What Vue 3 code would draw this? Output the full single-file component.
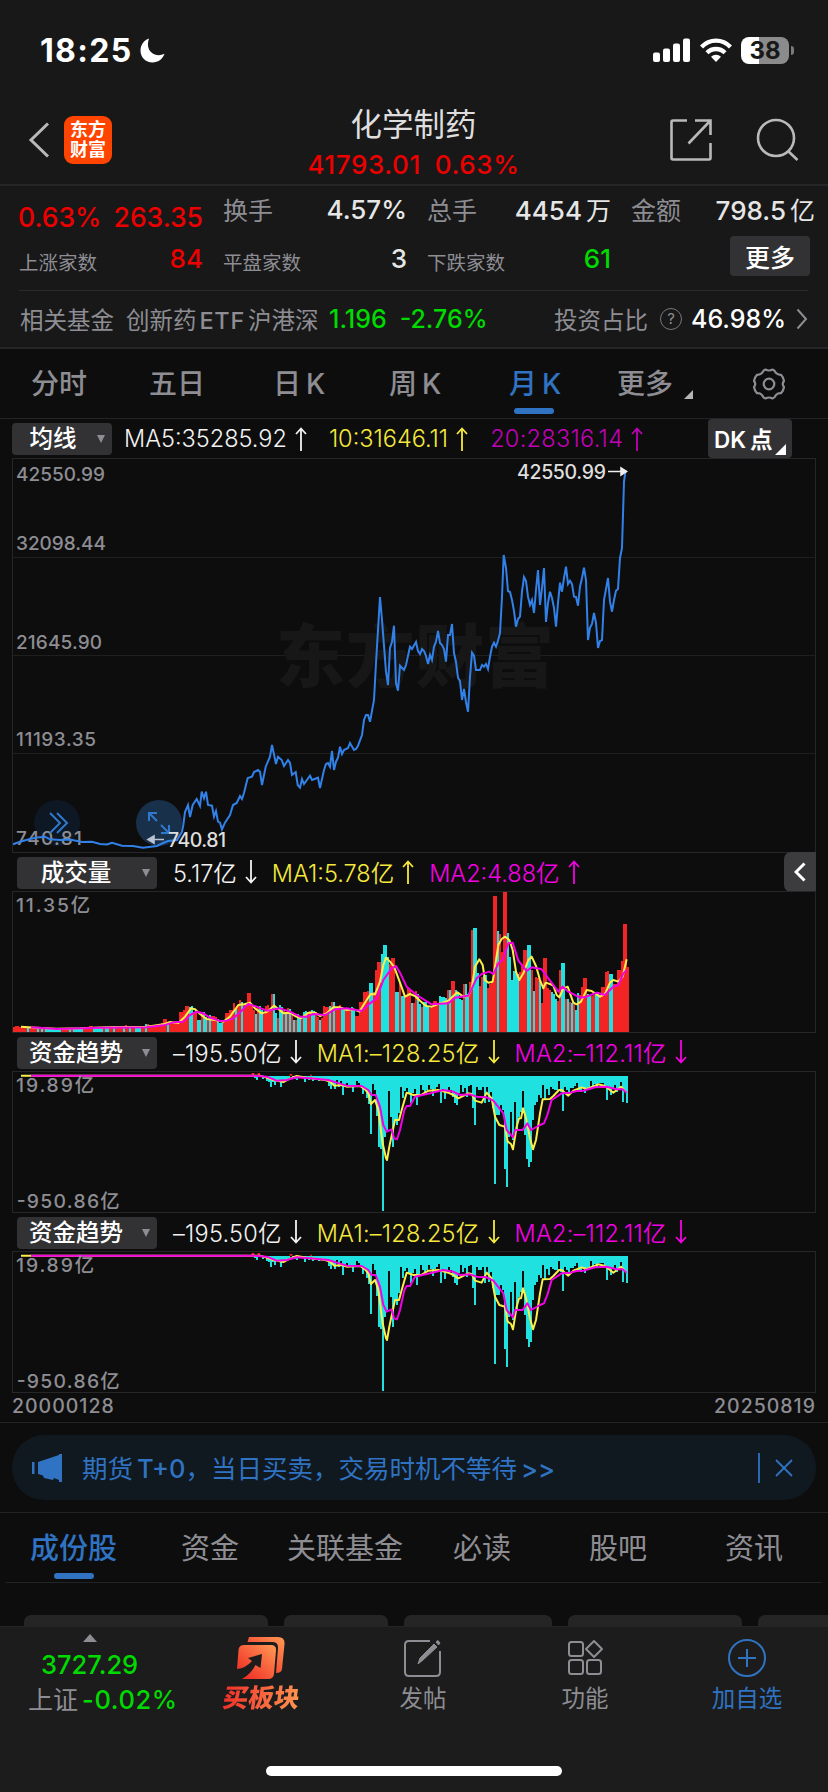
<script setup>
const periods = [
  { text: '分时' },
  { text: '五日' },
  { text: '日', suffix: 'K' },
  { text: '周', suffix: 'K' },
  { text: '月', suffix: 'K', active: true },
  { text: '更多', corner: true },
]

const sections = ['成份股', '资金', '关联基金', '必读', '股吧', '资讯']

const averages = [
  { text: 'MA5:35285.92', tone: 'white' },
  { text: '10:31646.11', tone: 'yellow' },
  { text: '20:28316.14', tone: 'purple' },
]

const volumeLegend = [
  { text: '5.17亿', tone: 'white', down: true },
  { text: 'MA1:5.78亿', tone: 'yellow' },
  { text: 'MA2:4.88亿', tone: 'magenta' },
]

const flowLegend = [
  { text: '–195.50亿', tone: 'white', down: true },
  { text: 'MA1:–128.25亿', tone: 'yellow', down: true },
  { text: 'MA2:–112.11亿', tone: 'magenta', down: true },
]

const priceLine = `13,844.3 20,841.7 30,839 37,837.5 45,836.7 50,839.3 60,840 70,839.5 82,842 92,841.7 100,844
107,844.5 112,842.7 122,845.7 133,846 143,847.7 157,846 163,843 168,841 177,840 182,831.7 183.3,825 185,812 188,805
190,817 192.7,805 196.7,799 200,806 201.7,791.7 204,798.3 206,791.7 208,805 212,805.7 214,816.7 216,811 218,821.7
220,822.7 222,829.3 225,822.7 230,815 233,805 236.7,803 240,796 242,799 244,793 247.7,778 252,776.7 254,772 258,770
260,771.7 262,785 265.7,766.7 270,756.7 272,745 276,764 278,756.7 281.7,760 284,766 288,760 290,763 292,775 295.7,772
297.7,785 300,787.7 302,779 304,784 310,775.7 312,780 318,777.7 320,788 324,770 326,764 328,763 330,766.7 332,751
334,770 336,761.7 338,757.7 340,746.7 342,754 344,750 348,748 350,743 354,750 356,749 358,745.7 362,735 364,720
366,715 368,715 370,721.7 374,700 376,663 378,630 380,597 382,620 386,671.7 388,685 390,648 392,641.7 394,625.7
396,683 398,690.7 400,665.7 404,670 406,665 410,646.7 412,649 416,642 418,651 420,654 422,649 424,651 426,656
428,664 430,655 432,660 434,646.7 436,641.7 438,631 440,643 442,645 444,649 446,661.7 448,635 450,635 452,624
454,653 456,662 458,677.7 460,681 462,700 464,689 466,702 468,711.7 470,676.7 472,652.7 474,655.7 476,670 480,670
482,665 484,666.7 486,664 488,669 490,656.7 492,646.7 494,642.7 496,646.7 498,640.7 500,633 502,596.7 503.7,555
506,568 508,591 510,592 512,600 514,611 516,626.7 518,619 520,616.7 522,591.7 524,577 526,581 528,596.7 530,605
532,600 534,613 536,590 538,570 540,605 542,588 544,568 546,622 548,603 550,591.7 552,598 554,608 556,626.7
558,603 560,582.7 562,591.7 564,578 566,566.7 568,584 570,580.7 572,584 574,596.7 576,597 578,605.7 580,586.7
582,578 584,567.7 586,580 588,640 590,627.7 592,624 594,613 596,623 598,648 600,641 602,640 604,600 606,589
608,578 610,601.7 612,611.7 614,600 616,590.7 618,589 620,558 622,548 624,481.7 625.7,470`

// monthly volume, one bar every 2px
const volumes = [
  5, 6, 6, 5, 5, 6, 5, 5, 4, 4, 4, 4, 4, 3, 4, 3, 3, 3, 3, 3, 3, 3, 3, 3, 3, 4, 3, 4, 4, 4,
  3, 3, 3, 3, 4, 4, 4, 4, 6, 6, 4, 4, 4, 4, 4, 4, 4, 5, 5, 6, 6, 5, 5, 5, 4, 5, 7, 6, 5, 5,
  5, 5, 5, 5, 5, 6, 8, 8, 7, 6, 6, 6, 6, 7, 9, 13, 13, 10, 9, 9, 10, 10, 10, 20, 20, 22, 26, 26, 25, 26,
  20, 19, 12, 12, 18, 20, 15, 13, 17, 16, 16, 15, 13, 9, 9, 10, 19, 19, 22, 22, 29, 24, 26, 32, 30, 28, 28, 39, 39, 28,
  22, 18, 24, 26, 22, 18, 26, 27, 22, 38, 38, 19, 14, 27, 25, 22, 20, 24, 23, 20, 12, 12, 18, 16, 15, 20, 21, 20, 21, 22,
  21, 20, 15, 12, 14, 26, 25, 25, 26, 30, 30, 25, 24, 27, 25, 24, 22, 24, 24, 25, 22, 16, 16, 30, 30, 40, 40, 41, 49, 49,
  40, 62, 70, 70, 78, 87, 87, 75, 68, 74, 74, 40, 40, 50, 36, 36, 36, 44, 42, 29, 29, 41, 38, 28, 25, 30, 30, 26, 24, 26,
  31, 31, 28, 36, 35, 35, 34, 42, 42, 51, 51, 42, 40, 33, 32, 48, 48, 38, 50, 102, 104, 104, 59, 46, 55, 56, 57, 44, 48, 50,
  136, 136, 101, 98, 80, 140, 140, 99, 75, 52, 61, 61, 58, 60, 68, 82, 82, 87, 87, 62, 41, 55, 54, 52, 29, 74, 74, 44, 42, 40,
  38, 33, 31, 62, 69, 69, 33, 33, 30, 29, 28, 22, 39, 37, 45, 54, 54, 38, 37, 36, 37, 40, 40, 37, 45, 45, 60, 61, 58, 58,
  48, 48, 62, 62, 71, 108, 108, 65,
]

// [first, last] index of the months that closed lower
const falling = [
  [7, 7], [12, 12], [14, 14], [16, 23], [28, 28], [30, 34], [40, 41], [42, 44], [46, 47], [50, 50], [55, 55], [58, 58],
  [61, 63], [66, 66], [77, 77], [88, 89], [92, 93], [95, 96], [98, 98], [102, 104], [111, 111], [114, 114],
  [121, 121], [123, 124], [130, 131], [133, 134], [136, 136], [138, 138], [140, 140], [142, 143], [145, 146],
  [149, 150], [153, 153], [158, 158], [160, 160], [164, 165], [169, 170], [178, 179], [184, 187], [191, 192],
  [194, 195], [199, 199], [202, 203], [205, 207], [213, 216], [218, 218], [221, 224], [226, 227], [230, 232],
  [235, 236], [242, 242], [247, 252], [257, 258], [260, 260], [263, 263], [269, 271], [274, 275], [277, 277],
  [279, 279], [281, 282], [287, 288], [291, 292], [298, 299],
]

const bars = volumes.map((h, i) => ({
  x: 39 + i * 6,
  y: 576 - h * 3,
  h: h * 3,
  down: falling.some(([a, b]) => i >= a && i <= b),
}))

const volumeMa1 = `63,560 110,563 170,566 240,565 320,562 440,560 490,553 510,546 535,549 555,530 573,505 585,508
600,522 620,537 645,540 670,545 690,530 715,495 735,492 750,488 765,505 785,520 800,516 822,497 835,507 850,520
870,518 885,528 903,535 925,518 945,518 960,528 980,520 1000,502 1020,502 1040,510 1060,508 1078,515 1100,480
1112,462 1125,463 1140,425 1150,375 1158,353 1170,365 1182,380 1200,428 1215,470 1230,462 1245,468 1260,482
1278,498 1295,500 1320,490 1345,482 1372,457 1390,470 1405,468 1415,445 1425,380 1438,358 1448,375 1455,420
1465,428 1478,425 1485,380 1495,315 1505,297 1515,290 1528,300 1538,330 1548,395 1558,420 1570,400 1585,360
1595,350 1608,378 1620,420 1630,445 1637,428 1650,432 1660,437 1670,465 1678,472 1690,445 1703,440 1710,460
1720,488 1730,493 1743,485 1760,450 1775,453 1800,470 1815,462 1830,428 1840,420 1855,425 1868,410 1880,358`

const volumeMa2 = `93,562 170,567 300,563 440,562 490,556 520,547 550,545 570,525 590,515 610,520 630,533 660,543
680,542 700,535 725,512 745,492 770,500 800,512 840,505 870,515 900,530 920,530 940,522 975,525 1005,508 1040,505
1085,513 1110,490 1130,475 1150,420 1175,385 1188,378 1200,398 1220,440 1250,465 1295,493 1345,490 1365,473
1405,467 1430,415 1445,402 1468,395 1480,402 1495,370 1508,360 1525,310 1538,308 1555,362 1580,393 1595,382
1625,388 1645,415 1675,455 1688,440 1705,455 1740,473 1760,470 1790,458 1815,465 1840,440 1855,435 1870,400 1880,390`

// lower end of each outflow bar, starting with month 121
const outflow = [
  145, 151, 140, 142, 148, 145, 152, 155, 172, 155, 164, 150, 155, 170, 156, 152, 150, 145, 137, 140, 146, 150, 144, 144, 140,
  155, 148, 150, 140, 153, 150, 150, 153, 146, 150, 150, 152, 168, 178, 162, 176, 150, 172, 152, 196, 165, 160, 168, 170, 187,
  168, 152, 158, 165, 192, 178, 205, 222, 312, 162, 180, 258, 350, 356, 542, 320, 300, 183, 260, 350, 270, 285, 250, 170, 205,
  182, 175, 190, 218, 190, 178, 226, 195, 165, 180, 190, 180, 165, 178, 198, 178, 172, 162, 218, 178, 206, 180, 172, 180, 200,
  218, 226, 190, 165, 186, 175, 200, 168, 165, 235, 286, 172, 180, 180, 170, 220, 172, 215, 185, 235, 463, 255, 254, 225, 240,
  416, 471, 320, 245, 330, 217, 300, 260, 245, 184, 316, 386, 410, 396, 270, 225, 216, 195, 205, 165, 207, 178, 195, 172, 178,
  180, 180, 153, 185, 242, 170, 180, 190, 175, 175, 167, 160, 183, 185, 172, 188, 175, 170, 153, 168, 162, 170, 160, 160, 158,
  175, 210, 178, 195, 175, 165, 185, 175, 155, 215, 182, 220,
]

const outflowPath = outflow.map((y, i) => `M${762 + i * 6} 137h6V${y}h-6z`).join('')

const flowMa1 = `63,137 780,137 800,143 820,150 850,156 865,148 890,138 920,143 975,150 990,155 1003,167 1025,165
1040,170 1080,168 1095,178 1105,190 1113,222 1125,210 1135,240 1148,340 1158,385 1161,390 1168,350 1185,270 1197,270
1205,240 1220,188 1240,195 1263,195 1285,182 1315,180 1345,188 1360,195 1375,205 1405,190 1415,192 1425,212
1445,218 1460,188 1475,205 1485,260 1498,285 1515,290 1523,335 1533,342 1539,358 1550,290 1557,265 1563,265
1569,235 1578,265 1590,325 1599,358 1608,330 1620,250 1628,208 1650,207 1660,198 1677,180 1685,180 1705,197
1720,182 1745,172 1760,177 1795,163 1815,168 1840,188 1863,170 1880,188`

const flowMa2 = `93,137 765,137 800,140 830,152 860,150 890,142 930,145 985,150 1010,158 1040,167 1085,168 1105,180
1115,195 1127,195 1140,230 1150,285 1160,305 1175,298 1182,325 1191,328 1200,300 1213,240 1220,228 1230,228
1245,200 1290,190 1330,180 1360,185 1380,195 1410,193 1430,200 1460,202 1480,212 1510,250 1520,300 1539,322
1545,300 1568,300 1582,280 1593,300 1620,285 1632,280 1642,255 1655,210 1685,190 1710,188 1730,183 1750,182
1785,172 1820,170 1850,178 1868,178 1880,188`
</script>

<template>
  <div class="screen">
    <header class="top">
      <div class="status">
        <span class="clock">18:25</span>
        <svg class="moon" width="25" height="25" viewBox="0 0 25 25"><path d="M9 0.5C7 6.500 8 11.500 11.500 14.500C15 17.500 20 18 24.500 15.800C22.500 21.300 18 24.500 12.500 24.500C5.500 24.500 0.500 19.400 0.500 12.600C0.500 7 4 2 9 0.500Z" fill="#fff" /></svg>
        <svg class="signal" width="38" height="24" viewBox="0 0 38 24" fill="#fff">
          <rect x="0" y="14.500" width="7" height="9.500" rx="2" />
          <rect x="10" y="10.500" width="7" height="13.500" rx="2" />
          <rect x="20" y="5.500" width="7" height="18.500" rx="2" />
          <rect x="30" y="0.500" width="7" height="23.500" rx="2" />
        </svg>
        <svg class="wifi" width="32" height="24" viewBox="0 0 32 24" fill="none" stroke="#fff" stroke-width="4.300">
          <path d="M1.500 9C9.500 0.500 22.500 0.500 30.500 9" />
          <path d="M7 14.800C12 9.700 20 9.700 25 14.800" />
          <path d="M16 24L11 18.700C13.800 16 18.200 16 21 18.700Z" fill="#fff" stroke="none" />
        </svg>
        <div class="battery"><span>38</span></div>
        <i class="nub"></i>
      </div>

      <div class="nav">
        <svg width="22" height="36" viewBox="0 0 22 36" fill="none" stroke="#b9b9b9" stroke-width="3"><path d="M20 1.500L3 18L20 34.500" /></svg>
        <div class="logo"><span>东方</span><span>财富</span></div>
        <div class="heading">
          <h1>化学制药</h1>
          <p><span>41793.01</span><span>0.63%</span></p>
        </div>
        <svg class="share" width="44" height="44" viewBox="0 0 44 44" fill="none" stroke="#b9b9b9" stroke-width="2.600">
          <path d="M18 2.500H4Q2.500 2.500 2.500 4V40Q2.500 41.500 4 41.500H40Q41.500 41.500 41.500 40V25" />
          <path d="M26 2.500H41.500V17M41 3L19.500 25.500" />
        </svg>
        <svg class="search" width="44" height="44" viewBox="0 0 44 44" fill="none" stroke="#b9b9b9" stroke-width="2.600">
          <circle cx="20" cy="20" r="18" />
          <path d="M32 33L41.500 42" />
        </svg>
      </div>
    </header>

    <section class="stats">
      <div class="grid">
        <div class="pair big red"><span>0.63%</span><span>263.35</span></div>
        <div class="pair"><em>换手</em><b>4.57%</b></div>
        <div class="pair"><em>总手</em><b>4454<i>万</i></b></div>
        <div class="pair"><em>金额</em><b>798.5<i>亿</i></b></div>
        <div class="pair low"><em>上涨家数</em><b class="red">84</b></div>
        <div class="pair low"><em>平盘家数</em><b>3</b></div>
        <div class="pair low"><em>下跌家数</em><b class="green">61</b></div>
        <button class="more">更多</button>
      </div>
      <div class="fund">
        <span>相关基金</span>
        <span class="fund-name">创新药<i>ETF</i>沪港深</span>
        <span class="green quote">1.196</span>
        <span class="green quote change">-2.76%</span>
        <span class="ratio">投资占比</span>
        <span class="help">?</span>
        <span class="quote percent">46.98%</span>
        <svg width="12" height="22" viewBox="0 0 12 22" fill="none" stroke="#8d8d93" stroke-width="2"><path d="M1.500 1.500L10 11L1.500 20.500" /></svg>
      </div>
    </section>

    <nav class="periods">
      <span v-for="p in periods" :key="p.text" :class="{ active: p.active, corner: p.corner }">{{ p.text }}<i v-if="p.suffix">{{ p.suffix }}</i></span>
      <svg width="34" height="34" viewBox="0 0 34 34" fill="none" stroke="#8d8d93" stroke-width="2.200" stroke-linejoin="round">
        <path d="M13.500 2.500Q17 4.500 20.500 2.500Q22.500 3 24 6Q26 8 29 7.800Q31.500 10.500 32 14Q29.500 17 32 20Q31.500 23.500 29 26.200Q26 26 24 28Q22.500 31 20.500 31.500Q17 29.500 13.500 31.500Q11.500 31 10 28Q8 26 5 26.200Q2.500 23.500 2 20Q4.500 17 2 14Q2.500 10.500 5 7.800Q8 8 10 6Q11.500 3 13.500 2.500Z" />
        <circle cx="17" cy="17" r="5.300" />
      </svg>
    </nav>

    <div class="averages">
      <span class="picker short">均线</span>
      <span v-for="a in averages" :key="a.text" class="legend" :class="a.tone">
        {{ a.text }}<svg width="12" height="24" viewBox="0 0 12 24"><path d="M6 24V1.500M1 7L6 1.500L11 7" /></svg>
      </span>
      <span class="dk">DK<i>点</i></span>
    </div>

    <div class="pane price">
      <svg width="804" height="394" viewBox="12 458 804 394">
        <g stroke="#1f1f20" stroke-width="1">
          <path d="M12 557.500H816M12 655.500H816M12 753.500H816" />
        </g>
        <text x="276" y="682" class="watermark" textLength="278">东方财富</text>
        <circle cx="57" cy="823" r="23" fill="#0e1825" />
        <circle cx="159" cy="823" r="23" fill="#19304a" />
        <g class="axis">
          <text x="16" y="480.500" textLength="89">42550.99</text>
          <text x="16" y="550" textLength="90">32098.44</text>
          <text x="16" y="648.500" textLength="86">21645.90</text>
          <text x="16" y="746" textLength="80">11193.35</text>
          <text x="16" y="845" textLength="66">740.81</text>
        </g>
        <g fill="none" stroke="#2f78cb" stroke-width="2">
          <path d="M50 813L60 823L50 833M57 813L67 823L57 833" />
          <path d="M149 821V813H157M149 813L157 821M161 825L169 833M161 833H169V825" />
        </g>
        <polyline :points="priceLine" fill="none" stroke="#3181e8" stroke-width="2" />
        <g class="mark">
          <text x="517" y="479" textLength="89">42550.99</text>
          <text x="168" y="846.500" textLength="58">740.81</text>
          <path d="M608 471.500H622M621 468L626.500 471.500L621 475Z" />
          <path class="dim" d="M164 839.500H151M154 836L148 839.500L154 843Z" />
        </g>
      </svg>
    </div>

    <div class="caption">
      <span class="picker">成交量</span>
      <span v-for="l in volumeLegend" :key="l.text" class="legend" :class="l.tone">
        {{ l.text }}<svg width="12" height="24" viewBox="0 0 12 24" :class="{ down: l.down }"><path d="M6 24V1.500M1 7L6 1.500L11 7" /></svg>
      </span>
      <span class="collapse">
        <svg width="12" height="20" viewBox="0 0 12 20" fill="none" stroke="#fff" stroke-width="3"><path d="M10.500 1.500L2 10L10.500 18.500" /></svg>
      </span>
    </div>

    <div class="pane">
      <svg width="804" height="141" viewBox="36 153 2412 423">
        <rect v-for="b in bars" :key="b.x" :x="b.x" :y="b.y" width="6" :height="b.h" :fill="b.down ? '#1fe2e0' : '#f32424'" shape-rendering="crispEdges" />
        <polyline :points="volumeMa1" class="ma" stroke="#fbee4b" />
        <polyline :points="volumeMa2" class="ma" stroke="#f400e4" />
        <text x="48" y="215" class="axis wide" textLength="222">11.35亿</text>
      </svg>
    </div>

    <template v-for="n in 2" :key="n">
      <div class="caption flow">
        <span class="picker">资金趋势</span>
        <span v-for="l in flowLegend" :key="l.text" class="legend" :class="l.tone">
          {{ l.text }}<svg width="12" height="24" viewBox="0 0 12 24" :class="{ down: l.down }"><path d="M6 24V1.500M1 7L6 1.500L11 7" /></svg>
        </span>
      </div>
      <div class="pane">
        <svg width="804" height="141" viewBox="36 123 2412 423">
          <path :d="outflowPath" fill="#1fe2e0" shape-rendering="crispEdges" />
          <path d="M755 129h8v6h-8zM773 129h7v6h-7zM869 132h8v5h-8zM930 134h6v3h-6z" fill="#f32424" />
          <polyline :points="flowMa1" class="ma" stroke="#fbee4b" />
          <polyline :points="flowMa2" class="ma" stroke="#f400e4" />
          <text x="48" y="186" class="axis wide" textLength="234">19.89亿</text>
          <text x="50" y="534" class="axis wide" textLength="309">-950.86亿</text>
        </svg>
      </div>
    </template>

    <div class="dates"><span>20000128</span><span>20250819</span></div>

    <div class="promo">
      <div class="banner">
        <svg width="31" height="28" viewBox="0 0 31 28" fill="#2f73c2">
          <path d="M0 8H2.500V20H0zM6 8L27 1V0H30V28H27V26L22 24L21 26L12 24L11 21.500L6 20z" />
        </svg>
        <span>期货<i>T+0</i>，当日买卖，交易时机不等待<i>&gt;&gt;</i></span>
        <svg class="close" width="36" height="30" viewBox="0 0 36 30" stroke="#2f73c2" stroke-width="1.800"><path d="M1 0V30M18 7L34 23M34 7L18 23" /></svg>
      </div>
    </div>

    <nav class="sections">
      <span v-for="s in sections" :key="s" :class="{ active: s === '成份股' }">{{ s }}</span>
    </nav>

    <div class="chips"><i></i><i></i><i></i><i></i><i></i></div>

    <footer class="dock">
      <div class="index">
        <i class="up"></i>
        <b class="green">3727.29</b>
        <span>上证<b class="green">-0.02%</b></span>
      </div>
      <div class="item buy">
        <svg width="48" height="44" viewBox="0 0 48 44">
          <defs>
            <linearGradient id="fire" x1="0" y1="1" x2="1" y2="0">
              <stop offset="0.100" stop-color="#f02d25" />
              <stop offset="1" stop-color="#ff9a55" />
            </linearGradient>
          </defs>
          <path d="M12 1H41Q48 1 47.500 8L45 33Q44.500 37 39 37L41 12Q41.500 6 35 6H10.500Z" fill="url(#fire)" />
          <path d="M7 9H34Q39.500 9 39 14.500L37 38Q36.500 43 31 43H5Q14 38 18.500 29L23.500 32L25 18L11 22L15 25Q9 32 0 33L1.500 14Q2 9 7 9Z" fill="url(#fire)" />
        </svg>
        <span>买板块</span>
      </div>
      <div class="item">
        <svg width="40" height="40" viewBox="0 0 40 40" fill="none" stroke="#8d8d93" stroke-width="2">
          <path d="M27 3H6Q2 3 2 7V34Q2 38 6 38H33Q37 38 37 34V13" />
          <path d="M15 26L17 20L31 6L34 9L20 22ZM33 4L35 2.500L37 5L35.500 7Z" fill="#8d8d93" stroke-width="1" />
        </svg>
        <span>发帖</span>
      </div>
      <div class="item">
        <svg width="40" height="40" viewBox="0 0 40 40" fill="none" stroke="#8d8d93" stroke-width="2">
          <rect x="4" y="4" width="14" height="14" rx="2.500" />
          <rect x="4" y="22" width="14" height="14" rx="2.500" />
          <rect x="22" y="22" width="14" height="14" rx="2.500" />
          <path d="M29 3L37 11L29 19L21 11Z" stroke-linejoin="round" />
        </svg>
        <span>功能</span>
      </div>
      <div class="item add">
        <svg width="40" height="40" viewBox="0 0 40 40" fill="none" stroke="#2f73c2" stroke-width="2">
          <circle cx="20" cy="20" r="18" />
          <path d="M11 20H29M20 11V29" />
        </svg>
        <span>加自选</span>
      </div>
      <div class="home"></div>
    </footer>
  </div>
</template>

<style>
body {
  background: #0d0d0d;
}
</style>

<style scoped>
.screen {
  width: 828px;
  height: 1792px;
  overflow: hidden;
  display: flex;
  flex-direction: column;
  background: #0d0d0d;
  color: #8d8d93;
  font-family: "Inter", "Noto Sans CJK SC", sans-serif;
  white-space: nowrap;
}

.screen * {
  box-sizing: border-box;
}

i, em {
  font-style: normal;
}

b {
  font-weight: 500;
}

svg {
  display: block;
  flex: none;
}

.red { color: #ec0000 !important; }
.green { color: #00da00 !important; }
.white { color: #f2f2f2; }
.yellow { color: #f5e93c; }
.purple { color: #c100b9; letter-spacing: 0.300px; }
.magenta { color: #f400e4; }

.top {
  height: 186px;
  background: #181818;
  border-bottom: 2px solid #262628;
}

.status {
  display: flex;
  align-items: center;
  height: 100px;
  padding-left: 40px;
  color: #fff;
}

.clock {
  width: 100px;
  font-size: 32px;
  font-weight: 700;
  letter-spacing: 1.300px;
}

.signal {
  margin-left: 488px;
}

.wifi {
  margin-left: 9px;
}

.battery {
  width: 48px;
  height: 27px;
  margin-left: 9px;
  border-radius: 8px;
  background: linear-gradient(90deg, #fff 38%, #8b8b8b 38%);
  color: #181818;
  font-size: 24px;
  font-weight: 700;
  line-height: 27px;
  text-align: center;
}

.nub {
  width: 3px;
  height: 9px;
  margin-left: 2px;
  border-radius: 0 3px 3px 0;
  background: #7a7a7a;
}

.nav {
  display: grid;
  grid-template-columns: 36px 48px 1fr 44px 44px;
  grid-template-rows: 80px;
  align-items: center;
  height: 80px;
  padding: 0 28px;
}

.logo {
  display: flex;
  flex-direction: column;
  justify-content: center;
  height: 48px;
  border-radius: 9px;
  background: #ff4400;
  color: #fff;
  font-size: 18px;
  font-weight: 700;
  line-height: 20px;
  text-align: center;
}

.heading {
  padding-top: 8px;
  padding-right: 101px;
  padding-left: 104px;
  text-align: center;
}

.heading h1 {
  margin: 0;
  color: #dedede;
  font-size: 31.500px;
  font-weight: 400;
  line-height: 38px;
}

.heading p {
  display: flex;
  justify-content: center;
  gap: 14px;
  margin: 4px 0 0;
  color: #ec0000;
  font-size: 26px;
  font-weight: 500;
  letter-spacing: 0.600px;
  line-height: 34px;
}

.share {
  margin-left: -43px;
}

.stats {
  height: 163px;
  background: #181818;
  border-bottom: 2px solid #262628;
}

.grid {
  display: grid;
  grid-template-columns: repeat(4, 184px);
  grid-template-rows: 48px 48px;
  column-gap: 20px;
  height: 105px;
  margin: 0 20px 0 19px;
  border-bottom: 1px solid #2a2a2c;
}

.pair {
  display: flex;
  justify-content: space-between;
  align-items: center;
  margin-top: -2px;
  font-size: 25px;
}

.pair b {
  color: #e6e6e6;
  font-size: 26px;
}

.pair b i {
  margin-left: 4px;
  font-size: 25px;
  font-weight: 400;
}

.big {
  margin-left: -1px;
  padding-top: 15px;
  font-size: 26.500px;
  font-weight: 500;
}

.low {
  margin-top: 0;
}

.low em {
  padding-top: 6px;
  font-size: 19.500px;
}

.more {
  justify-self: end;
  width: 80px;
  height: 40px;
  margin-top: 2px;
  margin-right: 5px;
  padding: 0;
  border: 0;
  border-radius: 4px;
  background: #323234;
  color: #fff;
  font: 500 25px "Noto Sans CJK SC", sans-serif;
  line-height: 38px;
}

.fund {
  display: flex;
  align-items: center;
  height: 56px;
  padding: 0 20px;
  font-size: 23.500px;
}

.fund-name {
  width: 192px;
  margin: 0 11px 0 12px;
}

.fund-name i {
  margin: 0 3px;
  letter-spacing: 0.700px;
  font-weight: 500;
}

.quote {
  font-size: 25px;
  font-weight: 500;
}

.change {
  margin-left: 13px;
}

.ratio {
  margin-left: auto;
}

.help {
  width: 22px;
  height: 22px;
  margin: 0 9px 0 12px;
  border: 1.500px solid #77777c;
  border-radius: 50%;
  font-size: 15px;
  line-height: 19px;
  text-align: center;
}

.percent {
  margin-right: 10px;
  color: #fff;
}

.periods {
  display: grid;
  grid-template-columns: 118px 124px 116px 120px 108px 135px 34px;
  align-items: center;
  height: 70px;
  padding-left: 31px;
  border-bottom: 1px solid #242426;
  font-size: 28px;
  font-weight: 500;
}

.periods span {
  position: relative;
  justify-self: start;
  line-height: 70px;
}

.periods span i {
  margin-left: 5px;
}

.active {
  color: #2f73c2;
}

.active::after {
  content: "";
  position: absolute;
  left: 50%;
  bottom: 5px;
  width: 40px;
  height: 6px;
  margin-left: -21px;
  border-radius: 3px;
  background: #2f73c2;
}

.corner::after {
  content: "";
  position: absolute;
  right: -20px;
  bottom: 20px;
  border-bottom: 9px solid #b5b5b8;
  border-left: 9px solid transparent;
}

.averages,
.caption {
  display: flex;
  align-items: center;
  height: 39px;
  padding-left: 12px;
}

.caption {
  height: 38px;
  padding-left: 17px;
}

.picker {
  position: relative;
  width: 140px;
  height: 32px;
  margin-right: 16px;
  padding-right: 22px;
  border-radius: 4px;
  background: #323234;
  color: #fff;
  font-size: 23.500px;
  font-weight: 500;
  line-height: 32px;
  text-align: center;
}

.picker::after {
  content: "";
  position: absolute;
  top: 12px;
  right: 7px;
  border-top: 8px solid #8d8d93;
  border-right: 4px solid transparent;
  border-left: 4px solid transparent;
}

.caption .picker {
  margin-top: 1px;
}

.short {
  width: 100px;
  margin-right: 12px;
  padding-right: 18px;
}

.legend {
  display: flex;
  align-items: center;
  gap: 8px;
  margin-right: 15px;
  font-size: 23.500px;
  font-weight: 350;
}

.averages .legend {
  margin-right: 22px;
}

.flow .legend {
  letter-spacing: 0.250px;
}

.legend path {
  fill: none;
  stroke: currentColor;
  stroke-width: 1.800;
}

.down {
  transform: rotate(180deg);
}

.dk {
  position: relative;
  width: 84px;
  height: 39px;
  margin-right: 36px;
  margin-left: auto;
  padding-left: 6px;
  border-radius: 4px;
  background: #323234;
  color: #fff;
  font-size: 22.500px;
  font-weight: 600;
  line-height: 41px;
}

.dk i {
  margin-left: 4px;
}

.dk::after {
  content: "";
  position: absolute;
  right: 6px;
  bottom: 3px;
  border-bottom: 11px solid #fff;
  border-left: 11px solid transparent;
}

.pane {
  width: 804px;
  height: 142px;
  margin-left: 12px;
  outline: 1px solid #262628;
  outline-offset: -1px;
}

.price {
  height: 395px;
}

.watermark {
  fill: #171717;
  font-size: 69px;
  font-weight: 900;
}

.axis {
  fill: #8d8d93;
  font-size: 19px;
  font-weight: 500;
}

.wide {
  font-size: 58px;
}

.mark text {
  fill: #dedede;
  font-size: 19.500px;
  font-weight: 500;
}

.mark path {
  fill: #eee;
  stroke: #eee;
  stroke-width: 1.600;
}

.mark .dim {
  fill: #b9c4d2;
  stroke: #b9c4d2;
}

.ma {
  fill: none;
  stroke-width: 6;
  stroke-linejoin: round;
}

.collapse {
  display: grid;
  place-items: center;
  width: 32px;
  height: 40px;
  margin-right: 12px;
  margin-left: auto;
  border-radius: 7px 0 0 7px;
  background: #3c3c3e;
}

.dates {
  display: flex;
  justify-content: space-between;
  height: 30px;
  padding: 0 12px;
  border-bottom: 1px solid #242426;
  font-size: 19.500px;
  font-weight: 500;
  letter-spacing: 1px;
  line-height: 27px;
}

.promo {
  height: 90px;
  padding: 12px 12px 0;
  border-bottom: 1px solid #242426;
}

.banner {
  display: flex;
  align-items: center;
  height: 65px;
  padding: 0 22px 0 20px;
  border-radius: 32px;
  background: #101820;
  color: #2f73c2;
  font-size: 25.500px;
}

.banner span {
  margin-top: -3px;
  margin-left: 19px;
}

.banner span i {
  margin-left: 4px;
  font-weight: 500;
}

.close {
  margin-left: auto;
  fill: none;
}

.sections {
  display: grid;
  grid-template-columns: 151px 106px 166px 136px 136px auto;
  align-items: center;
  height: 70px;
  margin: 0 6px;
  padding-top: 2px;
  padding-left: 24px;
  border-bottom: 1px solid #242426;
  font-size: 29px;
}

.sections span {
  position: relative;
  justify-self: start;
  line-height: 67px;
}

.sections .active {
  font-weight: 500;
}

.sections .active::after {
  bottom: 3px;
  margin-left: -20px;
}

.chips {
  display: grid;
  grid-template-columns: 244px 104px 148px 174px 100px;
  gap: 16px;
  height: 43px;
  padding: 32px 0 0 24px;
}

.chips i {
  border-radius: 7px 7px 0 0;
  background: #252525;
}

.dock {
  position: relative;
  display: grid;
  grid-template-columns: 180px 162px 162px 162px 162px;
  flex: 1;
  background: #1c1c1c;
  border-top: 1px solid #252525;
}

.index {
  display: flex;
  flex-direction: column;
  align-items: flex-start;
  padding: 7px 0 0 28px;
  font-size: 25px;
  line-height: 35px;
}

.index b {
  font-size: 25.500px;
}

.index > b {
  margin-left: 13px;
}

.index span b {
  margin-left: 4px;
  letter-spacing: 0.600px;
}

.index .up {
  margin-bottom: 5px;
  margin-left: 55px;
  border-bottom: 8px solid #8d8d93;
  border-right: 7px solid transparent;
  border-left: 7px solid transparent;
}

.item {
  display: flex;
  flex-direction: column;
  align-items: center;
  padding-top: 11px;
  font-size: 23.500px;
}

.item span {
  margin-top: 4px;
  line-height: 34px;
}

.buy svg {
  margin-top: -2px;
  margin-bottom: -3px;
}

.buy span {
  background: linear-gradient(90deg, #f0302a, #ff9550);
  -webkit-background-clip: text;
  background-clip: text;
  color: transparent;
  font-size: 25.500px;
  font-weight: 900;
  transform: skewX(-8deg);
}

.add {
  color: #2f73c2;
}

.home {
  position: absolute;
  left: 266px;
  bottom: 16px;
  width: 296px;
  height: 10px;
  border-radius: 5px;
  background: #fff;
}
</style>
